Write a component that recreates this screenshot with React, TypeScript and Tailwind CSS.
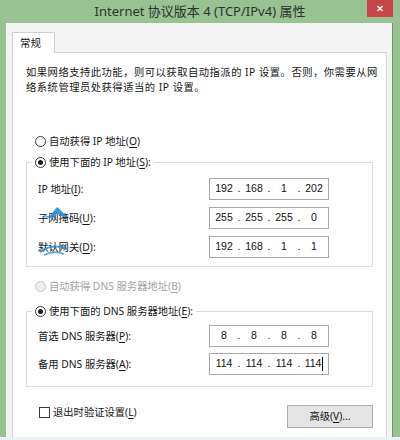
import { Fragment } from 'react';

// 单选按钮
function Radio({ checked = false, disabled = false }: { checked?: boolean; disabled?: boolean }) {
  return (
    <span
      className={`flex h-[11px] w-[11px] shrink-0 items-center justify-center rounded-full border ${
        disabled ? 'border-[#c9c9c9] bg-[#ededed]' : 'border-[#3a3a3a] bg-white'
      }`}
    >
      {checked && <span className="h-[5px] w-[5px] rounded-full bg-[#1b1b1b]" />}
    </span>
  );
}

// IP 地址输入框
function IpBox({ parts, caret = false }: { parts: string[]; caret?: boolean }) {
  return (
    <div className="flex h-[22px] w-[120px] items-center border border-[#a8a8a8] bg-white px-[3px] font-['Liberation_Sans',sans-serif] text-[10.5px] text-[#111]">
      {parts.map((p, i) => (
        <Fragment key={i}>
          {i > 0 && <span className="w-[8px] text-center">.</span>}
          <span className="flex w-[22px] items-center justify-center">
            {p}
            {caret && i === parts.length - 1 && <span className="ml-[1px] h-[14px] w-[1px] bg-black" />}
          </span>
        </Fragment>
      ))}
    </div>
  );
}

function Row({ label, children }: { label: React.ReactNode; children: React.ReactNode }) {
  return (
    <div className="flex items-center justify-between">
      <span className="relative leading-[16px]">{label}</span>
      {children}
    </div>
  );
}

export default function App() {
  return (
    <div className="flex h-[440px] w-[400px] flex-col overflow-hidden bg-[#98c292] font-['Noto_Sans','Noto_Sans_CJK_SC',sans-serif] text-[10.3px] text-[#161616]">
      {/* 标题栏 */}
      <div className="relative flex h-[23px] shrink-0 items-center justify-center">
        <span className="text-[13px] leading-none text-[#2b352a]">Internet 协议版本 4 (TCP/IPv4) 属性</span>
        <div className="absolute right-[7px] top-0 flex h-[17px] w-[26px] items-center justify-center bg-[#c94549] text-[13px] font-bold leading-none text-white">
          ×
        </div>
      </div>

      {/* 窗口主体 */}
      <div className="ml-[6px] mr-[7px] flex flex-1 flex-col border-l border-r border-l-[#fbfbfb] border-r-[#7f8f7d] bg-[#f3f3f3] pt-[9px]">
        <div className="ml-[5px] mr-[5px] flex flex-1 flex-col">
          {/* 选项卡 */}
          <div className="relative z-10 -mb-px flex h-[21px] w-[43px] items-center border border-b-0 border-[#cfcfcf] bg-white pl-[7px] text-[10.5px] leading-none">
            常规
          </div>

          {/* 选项卡面板 */}
          <div className="flex flex-1 flex-col border border-b-0 border-[#d4d4d4] bg-white px-[13px] pt-[12px]">
            <p className="whitespace-nowrap leading-[15px] tracking-[0.5px]">
              如果网络支持此功能，则可以获取自动指派的 IP 设置。否则，你需要从网
              <br />
              络系统管理员处获得适当的 IP 设置。
            </p>

            <div className="mt-[38px] flex h-[16px] items-center gap-[3px] pl-[9px] leading-[16px]">
              <Radio />
              <span>
                自动获得 IP 地址(<u className="underline-offset-2">O</u>)
              </span>
            </div>

            <fieldset className="mt-[5px] border border-[#dcdcdc]">
              <legend className="ml-[5px] flex h-[16px] items-center gap-[3px] px-[3px] leading-[16px]">
                <Radio checked />
                <span>
                  使用下面的 IP 地址(<u className="underline-offset-2">S</u>):
                </span>
              </legend>
              <div className="flex flex-col gap-[7px] pb-[8px] pl-[11px] pr-[43px] pt-[8px]">
                <Row
                  label={
                    <>
                      IP 地址(<u className="underline-offset-2">I</u>):
                    </>
                  }
                >
                  <IpBox parts={['192', '168', '1', '202']} />
                </Row>
                <Row
                  label={
                    <>
                      子网掩码(<u className="underline-offset-2">U</u>):
                      <svg
                        className="absolute left-[2px] top-[-4px] opacity-90"
                        width="30"
                        height="14"
                        viewBox="0 0 30 14"
                      >
                        <path d="M0 11 L10 10 L17 1 L28 11 L20 10 L17 7 L13 12 Z" fill="#1d8fd8" />
                      </svg>
                    </>
                  }
                >
                  <IpBox parts={['255', '255', '255', '0']} />
                </Row>
                <Row
                  label={
                    <>
                      默认网关(<u className="underline-offset-2">D</u>):
                      <svg
                        className="absolute left-[0px] top-[1px] opacity-80"
                        width="34"
                        height="16"
                        viewBox="0 0 34 16"
                      >
                        <path d="M2 12 Q14 3 30 9" stroke="#1d8fd8" strokeWidth="2" fill="none" />
                        <path d="M6 15 Q16 10 26 14" stroke="#1d8fd8" strokeWidth="1.5" fill="none" />
                      </svg>
                    </>
                  }
                >
                  <IpBox parts={['192', '168', '1', '1']} />
                </Row>
              </div>
            </fieldset>

            <div className="mt-[11px] flex h-[16px] items-center gap-[3px] pl-[9px] leading-[16px] text-[#a3a3a3]">
              <Radio disabled />
              <span>
                自动获得 DNS 服务器地址(<u className="underline-offset-2">B</u>)
              </span>
            </div>

            <fieldset className="mt-[9px] border border-[#dcdcdc]">
              <legend className="ml-[5px] flex h-[16px] items-center gap-[3px] px-[3px] leading-[16px]">
                <Radio checked />
                <span>
                  使用下面的 DNS 服务器地址(<u className="underline-offset-2">E</u>):
                </span>
              </legend>
              <div className="flex flex-col gap-[6px] pb-[11px] pl-[11px] pr-[43px] pt-[6px]">
                <Row
                  label={
                    <>
                      首选 DNS 服务器(<u className="underline-offset-2">P</u>):
                    </>
                  }
                >
                  <IpBox parts={['8', '8', '8', '8']} />
                </Row>
                <Row
                  label={
                    <>
                      备用 DNS 服务器(<u className="underline-offset-2">A</u>):
                    </>
                  }
                >
                  <IpBox parts={['114', '114', '114', '114']} caret />
                </Row>
              </div>
            </fieldset>

            <div className="mt-[17px] flex items-start justify-between">
              <label className="flex h-[16px] items-center gap-[3px] pl-[13px] leading-[16px]">
                <span className="h-[11px] w-[11px] border border-[#3a3a3a] bg-white" />
                <span>
                  退出时验证设置(<u className="underline-offset-2">L</u>)
                </span>
              </label>
              <button className="mt-[1px] flex h-[23px] w-[86px] items-center justify-center border border-[#adadad] bg-[#e4e4e4] leading-none">
                高级(<u className="underline-offset-2">V</u>)...
              </button>
            </div>
          </div>
        </div>
      </div>

      {/* 底部条 */}
      <div className="h-[3px] shrink-0 bg-[#eaf1f9]" />
    </div>
  );
}
